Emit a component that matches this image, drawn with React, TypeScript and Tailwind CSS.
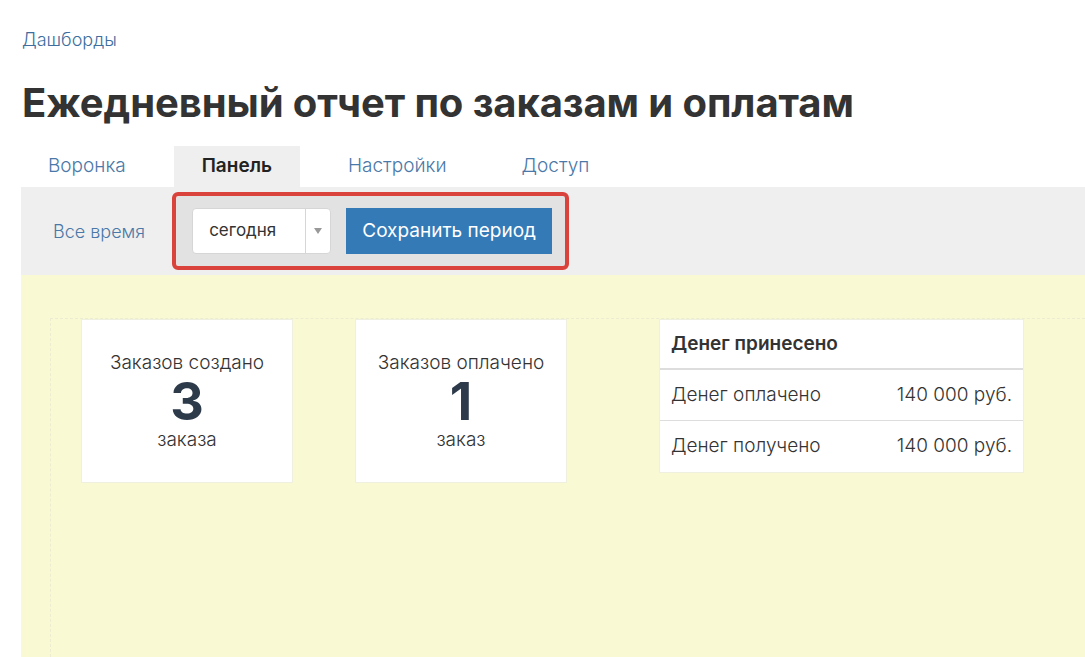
import React from "react";

export default function App() {
  const font = { fontFamily: "Inter, 'Noto Sans', sans-serif" };
  return (
    <div className="min-h-[657px] w-[1085px] overflow-hidden bg-white" style={font}>
      <div className="pl-[21px]">
        <div className="pt-[29px] pl-[1px] text-[18px] font-light leading-[22px] text-[#3d6e9e]">Дашборды</div>
        <h1 className="mt-[27px] pl-[1px] text-[40px] font-bold leading-[50px] tracking-[-0.1px] text-[#333333]">
          Ежедневный отчет по заказам и оплатам
        </h1>
        <div className="mt-[18px] flex h-[41px] gap-[21px] text-[19px]">
          <div className="flex items-center px-[27px] font-light text-[#4a78a8]">Воронка</div>
          <div className="flex items-center bg-[#efefef] px-[28px] font-semibold text-[#222222]">Панель</div>
          <div className="flex items-center px-[27px] font-light text-[#4a78a8]">Настройки</div>
          <div className="flex items-center px-[27px] font-light text-[#4a78a8]">Доступ</div>
        </div>
        <div className="flex h-[88px] items-center bg-[#efefef]">
          <div className="ml-[32px] text-[18px] font-light text-[#4a78a8]">Все время</div>
          <div className="ml-[27px] flex h-[78px] items-center gap-[15px] rounded-[6px] border-[4px] border-[#d9433b] bg-[#e2e2e2] pl-[16px] pr-[13px]">
            <div className="flex h-[46px] w-[139px] items-center rounded-[4px] border border-[#d6d6d6] bg-white">
              <div className="flex-1 pl-[16px] text-[17px] text-[#333333]">сегодня</div>
              <div className="flex h-full w-[25px] items-center justify-center border-l border-[#d6d6d6]">
                <svg width="8" height="6" viewBox="0 0 8 6"><path d="M0 0 L8 0 L4 6 Z" fill="#999999" /></svg>
              </div>
            </div>
            <button className="h-[46px] w-[206px] bg-[#337ab7] text-[19px] text-white">Сохранить период</button>
          </div>
        </div>
        <div className="h-[382px] bg-[#f9f9d3] pl-[29px] pt-[43px]">
          <div className="h-full border-l border-t border-dashed border-[#ecedd0] pl-[30px]">
            <div className="flex items-start">
              <div className="flex h-[164px] w-[212px] flex-col items-center border border-[#f0f0e0] bg-white pt-[32px] font-light text-[#333333]">
                <div className="text-[19px] leading-[22px]">Заказов создано</div>
                <div className="mt-[5px] text-[52px] font-bold leading-[46px] text-[#2c3a4a]">3</div>
                <div className="mt-[4px] text-[19px] leading-[22px]">заказа</div>
              </div>
              <div className="ml-[62px] flex h-[164px] w-[212px] flex-col items-center border border-[#f0f0e0] bg-white pt-[32px] font-light text-[#333333]">
                <div className="text-[19px] leading-[22px]">Заказов оплачено</div>
                <div className="mt-[5px] text-[52px] font-bold leading-[46px] text-[#2c3a4a]">1</div>
                <div className="mt-[4px] text-[19px] leading-[22px]">заказ</div>
              </div>
              <div className="ml-[92px] w-[365px] border border-[#f0f0e0] bg-white text-[19px] font-light text-[#333333]">
                <div className="flex h-[50px] items-center border-b-2 border-[#dddddd] px-[11px] font-semibold">Денег принесено</div>
                <div className="flex h-[51px] items-center justify-between border-b border-[#dddddd] px-[11px]">
                  <span>Денег оплачено</span>
                  <span>140 000 руб.</span>
                </div>
                <div className="flex h-[51px] items-center justify-between px-[11px]">
                  <span>Денег получено</span>
                  <span>140 000 руб.</span>
                </div>
              </div>
            </div>
          </div>
        </div>
      </div>
    </div>
  );
}
